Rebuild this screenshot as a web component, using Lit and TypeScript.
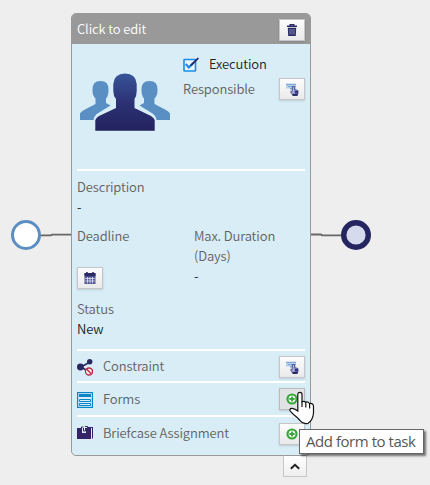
import { LitElement, html, css, svg } from "lit";
import { customElement, property } from "lit/decorators.js";

const trash = svg`<svg width="10" height="12" viewBox="0 0 10 12"><path d="M3.2 1.5V.6h3.6v.9M0 2.3h10" fill="none" stroke="#292a66" stroke-width="1.4"/><path d="M.8 3.7h8.4L8.800 12H1.200z" fill="#292a66"/><path d="M3 5v5.6M5 5v5.6M7 5v5.6" stroke="#9a9bc0" stroke-width=".8"/></svg>`;
const pick = svg`<svg width="13" height="13" viewBox="0 0 13 13"><path d="M0 .5h10v7H4v-2H0z" fill="#b7d0ea"/><path d="M0 1.500h10M2 3.500h8M4 5.500h4" stroke="#7fa6d5"/><path d="M6.300 3.500h2.200V6.500l3.500 1V10.500l-1 2H7L4.500 8.800l1.800-.4z" fill="#aab2dc" stroke="#4b4d92" stroke-width=".9"/><path d="M8.500 7.500l3.500 .5v2.500H9z" fill="#35367a"/><path d="M6.500 10.800h5.200v2H6.500z" fill="#25265f"/></svg>`;
const calendar = svg`<svg width="12" height="12" viewBox="0 0 12 12"><path d="M.5 1.2h11V12H.5z" fill="#555896"/><path d="M.5 1h11v3.3H.5zM2.2 0h1.6v2H2.2zM8.2 0h1.6v2H8.2z" fill="#292a66"/><path d="M3.5 5v6.3M6 5v6.3M8.5 5v6.3M1.3 6.500h9.400M1.3 9h9.400" stroke="#d4d6e8" stroke-width=".9"/></svg>`;
const plus = svg`<svg width="12" height="12" viewBox="0 0 12 12"><circle cx="6" cy="6" r="4.500" fill="#fff" stroke="#35a638" stroke-width="2.200"/><path d="M6 3.400v5.200M3.400 6h5.200" stroke="#35a638" stroke-width="1.800"/></svg>`;
const check = svg`<svg width="17" height="15" viewBox="0 0 17 15"><rect x="1" y="2.500" width="11.500" height="11.500" rx=".5" fill="#e9f5ff" stroke="#1b8ae8" stroke-width="1.600"/><path d="M2.800 7l3 3.500L9 7.500" fill="none" stroke="#1b8ae8" stroke-width="2.200"/><path d="M6.500 9.300L8 6.800L14.800.6L16 1.600L9.500 8.300z" fill="#252660"/></svg>`;
const people = svg`<svg width="90" height="58" viewBox="0 0 90 58">
  <defs><linearGradient id="g" x1="0" y1="0" x2="0" y2="1"><stop offset="0" stop-color="#385498"/><stop offset=".5" stop-color="#2c3275"/><stop offset="1" stop-color="#23235d"/></linearGradient></defs>
  <g fill="#5a8fc3"><path d="M0 47V40.500Q1 38.500 4 37L15.500 31V25.500Q12.500 23 12.500 17Q12 8 20.500 8Q29 8 28.500 17Q28.500 23 26 25.500V30L30.500 32.500L17.500 40.500Q14 43 13.500 47Z"/><path transform="matrix(-1 0 0 1 90 0)" d="M0 47V40.500Q1 38.500 4 37L15.500 31V25.500Q12.500 23 12.500 17Q12 8 20.500 8Q29 8 28.500 17Q28.500 23 26 25.500V30L30.500 32.500L17.500 40.500Q14 43 13.500 47Z"/></g>
  <path fill="url(#g)" d="M15.300 57.700V47Q16.500 44.500 19 43L36 35V26Q33.300 23 33.300 18V11Q34 .5 45 .5Q56 .5 56.700 11V18Q56.700 23 54.500 26V35L71 43Q74 45 74.700 47V57.700Z"/></svg>`;
const constraint = svg`<svg width="16" height="17" viewBox="0 0 16 17"><path d="M13 3L4 8l5 3" fill="none" stroke="#282963" stroke-width="1.700"/><circle cx="12.700" cy="2.800" r="2.700" fill="#282963"/><circle cx="3.400" cy="8" r="3.400" fill="#282963"/><circle cx="12" cy="12.500" r="3.500" fill="#f6e9ee" stroke="#be2440" stroke-width="1.300"/><path d="M9.500 10l5 5" stroke="#be2440" stroke-width="1.300"/></svg>`;
const forms = svg`<svg width="16" height="16" viewBox="0 0 16 16"><rect x=".6" y=".6" width="14.800" height="14.800" fill="#d9edf6" stroke="#0a85c8" stroke-width="1.200"/><path d="M2 2h12v3H2z" fill="#0a85c8"/><path d="M2.500 7.500h11v2h-11zM2.500 11.500h11v2h-11z" fill="none" stroke="#0a85c8"/></svg>`;
const briefcase = svg`<svg width="16" height="14" viewBox="0 0 16 14"><path d="M0 2h5v5h4V2h5v11H0z" fill="#35246a"/><path d="M15.500 1v11.500M11 1.500h5" stroke="#35246a" fill="none"/><path d="M4.500 2V1h2M8 .5h2.500V2M6.500 2v3h2V2" fill="none" stroke="#35246a"/></svg>`;
const chevron = svg`<svg width="10" height="7" viewBox="0 0 10 7"><path d="M.8 5.800L5 1.800l4.200 4" fill="none" stroke="#222" stroke-width="2"/></svg>`;
const pointer = svg`<svg width="26" height="34" viewBox="0 0 26 34"><path d="M8.800 19V3.500Q8.800 1.300 10.900 1.300Q13 1.300 13 3.500V10.800Q15 9.600 16.700 11.200Q19 10.400 20.500 12.500Q24.500 12 24.500 15.500V22Q23.800 29.500 19 32.300Q14 33.500 11 29.500Q8 26 4.500 23.500L1 19.800Q.5 17.700 2.500 17.400Q5 17 8.800 20Z" fill="#fff" stroke="#111" stroke-width="1.200"/><path d="M13 10.500v5.500M16.800 11.300V16.500M20.600 12.500V17.500" stroke="#111" stroke-width="1.200"/></svg>`;

@customElement("icon-button")
class IconButton extends LitElement {
  @property({ type: Boolean, reflect: true }) hovered = false;
  static styles = css`
    :host { display: block; flex: none; width: 26px; height: 22px; }
    button { width: 100%; height: 100%; display: flex; align-items: center; justify-content: center; box-sizing: border-box; padding: 0; margin: 0; border: 1px solid #c6c6ca; background: linear-gradient(#fcfcfd, #eaeaeb); box-shadow: 0 1px 2px #0002; }
    :host([hovered]) button { background: #e2e3e4; border-color: #bbb; }
  `;
  render() { return html`<button><slot></slot></button>`; }
}

@customElement("app-root")
class AppRoot extends LitElement {
  static styles = css`
    :host { display: block; position: relative; width: 430px; height: 485px; overflow: hidden; background: #eee; font: 350 13px/20px "Noto Sans CJK SC", sans-serif; color: #626262; letter-spacing: -.12px; }
    svg { display: block; flex: none; }
    .flow { position: absolute; inset: 0; }
    .card { position: absolute; left: 71px; top: 13px; width: 240px; height: 443px; box-sizing: border-box; border: 1px solid #999; border-radius: 5px; background: #d9edf6; overflow: hidden; }
    .head { height: 30px; padding: 0 5px; background: #999; color: #fff; display: flex; align-items: center; justify-content: space-between; }
    .head icon-button { margin-top: 2px; }
    .body { padding: 0 5px; }
    .summary { height: 125px; display: flex; border-bottom: 2px solid #fff; }
    .avatar { width: 106px; padding: 29px 0 0 3px; box-sizing: border-box; }
    .info { flex: 1; padding-top: 10px; }
    .exec { height: 20px; display: flex; gap: 9px; align-items: center; color: #222; }
    .resp { height: 22px; display: flex; align-items: center; justify-content: space-between; margin-top: 4px; }
    .dark { color: #222; }
    .desc { padding-top: 6px; height: 50px; box-sizing: border-box; }
    .dates { display: grid; grid-template-columns: 117px 1fr; padding-top: 5px; height: 73px; box-sizing: border-box; }
    .cal { margin-top: 21px; }
    .status { height: 55px; padding-top: 5px; box-sizing: border-box; }
    .row { display: flex; align-items: center; border-top: 2px solid #fff; box-sizing: border-box; }
    .row .ico { width: 26px; }
    .row .name { flex: 1; }
    .constraint { height: 32px; }
    .forms { height: 34px; }
    .briefcase { height: 34px; }
    .constraint icon-button, .briefcase icon-button, .forms .ico { margin-top: 2px; }
    .constraint .ico { margin-top: 3px; }
    .fold { position: absolute; left: 283px; top: 455px; width: 24px; height: 22px; box-sizing: border-box; border: 1px solid #c6c6c6; border-top-color: #999; background: linear-gradient(#fff, #eee); display: flex; align-items: center; justify-content: center; }
    .hand { position: absolute; left: 289px; top: 391px; }
    .tip { position: absolute; left: 299px; top: 429px; width: 125px; height: 25px; box-sizing: border-box; border: 1px solid #666; background: #fff; color: #575757; font: 15px/23px "Open Sans", sans-serif; letter-spacing: -.45px; padding-left: 6px; white-space: nowrap; box-shadow: 2px 2px 2px #0008; }
  `;
  render() {
    return html`
      <svg class="flow" width="430" height="485"><path d="M40 235.300h11l1-.7h20M310 234.500h11l1 .8h20" fill="none" stroke="#666" stroke-width="1.800"/><circle cx="26" cy="235" r="13.500" fill="#fff" stroke="#5b8ec2" stroke-width="3"/><circle cx="356" cy="235" r="12.300" fill="#d5daec" stroke="#25265f" stroke-width="5.400"/></svg>
      <div class="card">
        <div class="head"><span>Click to edit</span><icon-button>${trash}</icon-button></div>
        <div class="body">
          <div class="summary">
            <div class="avatar">${people}</div>
            <div class="info">
              <div class="exec">${check}<span>Execution</span></div>
              <div class="resp"><span>Responsible</span><icon-button>${pick}</icon-button></div>
            </div>
          </div>
          <div class="desc"><div>Description</div><div class="dark">-</div></div>
          <div class="dates">
            <div><div>Deadline</div><icon-button class="cal">${calendar}</icon-button></div>
            <div><div>Max. Duration<br>(Days)</div><div class="dark">-</div></div>
          </div>
          <div class="status"><div>Status</div><div class="dark">New</div></div>
          <div class="row constraint"><span class="ico">${constraint}</span><span class="name">Constraint</span><icon-button>${pick}</icon-button></div>
          <div class="row forms"><span class="ico">${forms}</span><span class="name">Forms</span><icon-button hovered>${plus}</icon-button></div>
          <div class="row briefcase"><span class="ico">${briefcase}</span><span class="name">Briefcase Assignment</span><icon-button>${plus}</icon-button></div>
        </div>
      </div>
      <div class="fold">${chevron}</div>
      <div class="tip">Add form to task</div>
      <div class="hand">${pointer}</div>
    `;
  }
}
